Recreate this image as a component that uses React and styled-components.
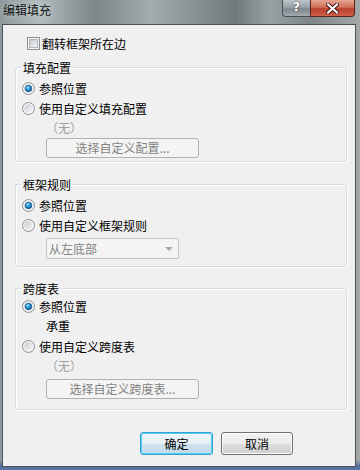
import React from 'react';
import styled, { createGlobalStyle } from 'styled-components';

const Global = createGlobalStyle`
  html, body {
    margin: 0;
    padding: 0;
  }
  body {
    font-family: "Noto Sans CJK SC", "Noto Sans", sans-serif;
    font-size: 12px;
    color: #000;
  }
`;

const Window = styled.div`
  width: 360px;
  height: 470px;
  display: flex;
  flex-direction: column;
  box-sizing: border-box;
  background:
    linear-gradient(180deg, rgba(0,0,0,0) 0, rgba(0,0,0,0) 460px, #4f6c98 466px, #5b79a6 470px),
    linear-gradient(90deg, #8d999b 0, #b1bbbd 40px, #7b8789 95px, #a2abad 150px, #8c9698 190px, #6f7a7d 235px, #9aa1a2 270px, #7e8587 310px, #a4a8a9 360px);
`;

const TitleBar = styled.div`
  height: 24px;
  flex: none;
  display: flex;
  justify-content: space-between;
  align-items: flex-start;
`;

const Title = styled.div`
  padding: 3px 0 0 3px;
  line-height: 14px;
  color: #111;
  text-shadow: 0 0 6px rgba(255,255,255,0.6);
`;

const Caption = styled.div`
  display: flex;
  margin-right: 5px;
`;

const HelpBtn = styled.div`
  width: 28px;
  height: 17px;
  box-sizing: border-box;
  border: 1px solid #4a4f55;
  border-top: none;
  border-right: none;
  border-radius: 0 0 0 4px;
  background: linear-gradient(180deg, #bfc5ca 0, #99a1a8 45%, #7d868e 55%, #a2a9af 100%);
  color: #fff;
  font: bold 12px "DejaVu Sans", sans-serif;
  text-align: center;
  line-height: 15px;
  text-shadow: 0 0 2px #333;
`;

const CloseBtn = styled.div`
  width: 45px;
  height: 17px;
  box-sizing: border-box;
  border: 1px solid #5a2420;
  border-top: none;
  border-radius: 0 0 4px 0;
  background: linear-gradient(180deg, #e8a493 0, #d0705a 45%, #b8402c 55%, #d0604a 100%);
  display: flex;
  align-items: center;
  justify-content: center;
`;

const Client = styled.div`
  flex: 1;
  margin: 0 4px 3px 2px;
  border: 1px solid #4c5257;
  background: #f0f0f0;
  padding: 8px 8px 0 12px;
  display: flex;
  flex-direction: column;
`;

const CheckRow = styled.label`
  height: 20px;
  display: flex;
  align-items: center;
  gap: 2px;
  padding-left: 12px;
`;

const Box = styled.span`
  width: 13px;
  height: 13px;
  box-sizing: border-box;
  border: 1px solid #8e8f8f;
  background: #f4f4f4;
  display: inline-flex;
  padding: 1px;
  &::after {
    content: "";
    flex: 1;
    border: 1px solid #b4b8bd;
    background: linear-gradient(135deg, #c6cad0, #f4f5f6);
  }
`;

const Group = styled.div`
  position: relative;
  margin-top: ${p => p.$mt}px;
  border: 1px solid #d5dfe5;
  border-radius: 3px;
  box-shadow: inset 1px 1px 0 #fff, 1px 1px 0 #fff;
  padding: ${p => p.$pt}px 6px ${p => p.$pb}px 6px;
`;

const Legend = styled.div`
  position: absolute;
  top: -7px;
  left: 6px;
  padding: 0 1px;
  line-height: 14px;
  background: #f0f0f0;
`;

const OptionRow = styled.div`
  height: 20px;
  display: flex;
  align-items: center;
  gap: 4px;
`;

const Indent = styled.div`
  padding-left: 24px;
  display: flex;
  flex-direction: column;
  align-items: flex-start;
`;

const Line = styled.div`
  height: 20px;
  line-height: 20px;
  color: ${p => (p.$muted ? '#a0a0a0' : '#000')};
`;

const PickButton = styled.div`
  width: 153px;
  height: 20px;
  margin-top: ${p => p.$mt || 0}px;
  box-sizing: border-box;
  border: 1px solid #adb2b5;
  border-radius: 3px;
  background: #f4f4f4;
  color: #838383;
  text-align: center;
  line-height: 18px;
`;

const Combo = styled.div`
  width: 133px;
  height: 21px;
  margin-top: 3px;
  box-sizing: border-box;
  border: 1px solid #c5c5c5;
  border-radius: 2px;
  background: #f4f4f4;
  color: #838383;
  display: flex;
  align-items: center;
  justify-content: space-between;
  padding: 0 5px 0 2px;
  &::after {
    content: "";
    border: 4px solid transparent;
    border-top: 4px solid #a9a9a9;
    border-bottom: none;
    margin-top: 1px;
  }
`;

const Footer = styled.div`
  margin-top: 22px;
  display: flex;
  justify-content: flex-end;
  gap: 8px;
  padding-right: 54px;
`;

const DialogButton = styled.div`
  width: ${p => p.$w}px;
  height: 23px;
  box-sizing: border-box;
  border: 1px solid ${p => (p.$primary ? '#3c9fd0' : '#707070')};
  border-radius: 3px;
  box-shadow: ${p => (p.$primary ? 'inset 0 0 0 1px #4ad1f8' : 'inset 0 0 0 1px #fcfcfc')};
  background: ${p => (p.$primary
    ? 'linear-gradient(180deg, #f1f7fa 0, #e4eff5 50%, #cfe3ee 51%, #c3dae8 100%)'
    : 'linear-gradient(180deg, #f2f2f2 0, #ebebeb 50%, #dddddd 51%, #cfcfcf 100%)')};
  text-align: center;
  line-height: 21px;
`;

function Radio({ checked }) {
  return (
    <svg width="13" height="13" viewBox="0 0 13 13">
      <defs>
        <linearGradient id="rb" x1="0" y1="0" x2="1" y2="1">
          <stop offset="0" stopColor="#c9ccd1" />
          <stop offset="1" stopColor="#f6f6f6" />
        </linearGradient>
        <radialGradient id="rd" cx="0.4" cy="0.35" r="0.7">
          <stop offset="0" stopColor="#a8e0fb" />
          <stop offset="0.5" stopColor="#1a8fd8" />
          <stop offset="1" stopColor="#0a4f8a" />
        </radialGradient>
      </defs>
      <circle cx="6.5" cy="6.5" r="6" fill="#f4f4f4" stroke="#8e8f8f" />
      <circle cx="6.5" cy="6.5" r="4.3" fill="url(#rb)" />
      {checked && <circle cx="6.5" cy="6.5" r="3.3" fill="url(#rd)" stroke="#1b4f7a" strokeWidth="0.6" />}
    </svg>
  );
}

function CloseGlyph() {
  return (
    <svg width="13" height="11" viewBox="0 0 13 11">
      <path d="M2 1.5 L11 9.5 M11 1.5 L2 9.5" stroke="#4a1a14" strokeWidth="4" strokeLinecap="square" />
      <path d="M2 1.5 L11 9.5 M11 1.5 L2 9.5" stroke="#fff" strokeWidth="2" strokeLinecap="square" />
    </svg>
  );
}

export default function App() {
  return (
    <>
      <Global />
      <Window>
        <TitleBar>
          <Title>编辑填充</Title>
          <Caption>
            <HelpBtn>?</HelpBtn>
            <CloseBtn><CloseGlyph /></CloseBtn>
          </Caption>
        </TitleBar>
        <Client>
          <CheckRow>
            <Box />
            翻转框架所在边
          </CheckRow>

          <Group $mt={14} $pt={10} $pb={3}>
            <Legend>填充配置</Legend>
            <OptionRow><Radio checked />参照位置</OptionRow>
            <OptionRow><Radio />使用自定义填充配置</OptionRow>
            <Indent>
              <Line $muted>（无）</Line>
              <PickButton>选择自定义配置...</PickButton>
            </Indent>
          </Group>

          <Group $mt={22} $pt={10} $pb={7}>
            <Legend>框架规则</Legend>
            <OptionRow><Radio checked />参照位置</OptionRow>
            <OptionRow><Radio />使用自定义框架规则</OptionRow>
            <Indent>
              <Combo>从左底部</Combo>
            </Indent>
          </Group>

          <Group $mt={21} $pt={7} $pb={10}>
            <Legend>跨度表</Legend>
            <OptionRow><Radio checked />参照位置</OptionRow>
            <Indent>
              <Line>承重</Line>
            </Indent>
            <OptionRow><Radio />使用自定义跨度表</OptionRow>
            <Indent>
              <Line $muted>（无）</Line>
              <PickButton $mt={3}>选择自定义跨度表...</PickButton>
            </Indent>
          </Group>

          <Footer>
            <DialogButton $primary $w={73}>确定</DialogButton>
            <DialogButton $w={72}>取消</DialogButton>
          </Footer>
        </Client>
      </Window>
    </>
  );
}
